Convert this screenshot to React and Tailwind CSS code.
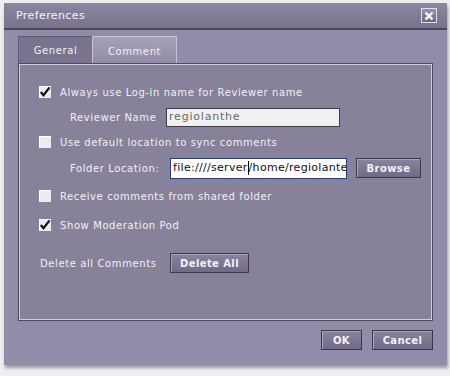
import React from "react";

function Check({ checked }) {
  return (
    <div className="w-[14px] h-[14px] border border-[#86829a] bg-[#ecebef] shadow-[inset_1px_1px_0_#ffffff] flex items-center justify-center shrink-0">
      {checked && (
        <svg width="12" height="12" viewBox="0 0 12 12">
          <path d="M1.8 6 L4.5 9.2 L10.6 1.4" stroke="#111" strokeWidth="2.2" fill="none" />
        </svg>
      )}
    </div>
  );
}

function Btn({ children, className = "" }) {
  return (
    <button
      className={`h-[20px] border border-[#3d384c] bg-gradient-to-b from-[#8a849e] to-[#6f6a85] shadow-[inset_1px_1px_0_#a9a4bc] text-[10px] font-bold text-[#f2f1f6] tracking-[0.4px] ${className}`}
    >
      {children}
    </button>
  );
}

export default function App() {
  return (
    <div className="w-[450px] h-[376px] bg-[#eeedf0] pt-[3px] pl-[4px] font-['DejaVu_Sans',sans-serif]">
      <div className="w-[443px] h-[362px] bg-[#928ca9] flex flex-col shadow-[1px_3px_3px_rgba(0,0,0,0.35)]">
        {/* title bar */}
        <div className="h-[27px] bg-gradient-to-b from-[#8b859f] to-[#78728e] flex items-center justify-between pl-[12px] pr-[10px] border-b-2 border-[#4d485e]">
          <span className="text-[11px] text-[#f4f3f8] tracking-[0.4px] pt-[1px]">Preferences</span>
          <div className="w-[16px] h-[15px] bg-gradient-to-b from-[#9a95ac] to-[#6a6480] border border-[#e0dde8] flex items-center justify-center">
            <svg width="10" height="10" viewBox="0 0 10 10">
              <path d="M1.5 1.5 L8.5 8.5 M8.5 1.5 L1.5 8.5" stroke="#fff" strokeWidth="2.4" />
            </svg>
          </div>
        </div>

        <div className="pl-[14px] pt-[6px]">
          {/* tabs */}
          <div className="flex h-[27px]">
            <div className="w-[74px] bg-[#79738f] border-t border-l border-[#5f5a72] flex items-center justify-center text-[10px] text-[#f1f0f5] tracking-[0.6px]">
              General
            </div>
            <div className="w-[85px] bg-gradient-to-b from-[#a7a2b9] to-[#928ca8] border-t border-l border-r border-[#c8c4d6] flex items-center justify-center pt-[2px] text-[10px] text-[#f1f0f5] tracking-[0.6px]">
              Comment
            </div>
          </div>

          {/* panel */}
          <div className="w-[415px] h-[258px] bg-[#878199] border border-[#4f4a63] shadow-[inset_1px_1px_0_#d0cce0,inset_-1px_-1px_0_#d0cce0] pl-[19px] text-[10px] text-[#f1f0f5] tracking-[0.6px]">
            <div className="flex items-center h-[20px] mt-[18px]">
              <Check checked />
              <span className="ml-[8px]">Always use Log-in name for Reviewer name</span>
            </div>
            <div className="flex items-center h-[20px] mt-[5px] pl-[32px]">
              <span className="w-[96px]">Reviewer Name</span>
              <div className="w-[174px] h-[19px] bg-[#f1f1f1] border border-[#3f3b4c] flex items-center pl-[2px] text-[11px] text-[#6a6a6a] tracking-[0.8px]">
                regiolanthe
              </div>
            </div>
            <div className="flex items-center h-[20px] mt-[5px]">
              <Check />
              <span className="ml-[8px]">Use default location to sync comments</span>
            </div>
            <div className="flex items-center h-[20px] mt-[6px] pl-[32px]">
              <span className="w-[100px]">Folder Location:</span>
              <div className="w-[177px] h-[21px] bg-white border border-[#3f3b4c] ring-2 ring-[#6e86c4] flex items-center pl-[2px] text-[11px] text-[#111] tracking-[0.3px] overflow-hidden whitespace-nowrap">
                <span>file:////server</span>
                <span className="w-px h-[14px] bg-black shrink-0"></span>
                <span>/home/regiolante</span>
              </div>
              <Btn className="w-[65px] ml-[9px]">Browse</Btn>
            </div>
            <div className="flex items-center h-[20px] mt-[8px]">
              <Check />
              <span className="ml-[8px]">Receive comments from shared folder</span>
            </div>
            <div className="flex items-center h-[20px] mt-[9px]">
              <Check checked />
              <span className="ml-[8px]">Show Moderation Pod</span>
            </div>
            <div className="flex items-center h-[20px] mt-[18px] pl-[2px]">
              <span className="w-[130px]">Delete all Comments</span>
              <Btn className="w-[79px]">Delete All</Btn>
            </div>
          </div>

          {/* footer */}
          <div className="flex justify-end gap-[10px] w-[415px] mt-[9px]">
            <Btn className="w-[41px]">OK</Btn>
            <Btn className="w-[61px]">Cancel</Btn>
          </div>
        </div>
      </div>
    </div>
  );
}
